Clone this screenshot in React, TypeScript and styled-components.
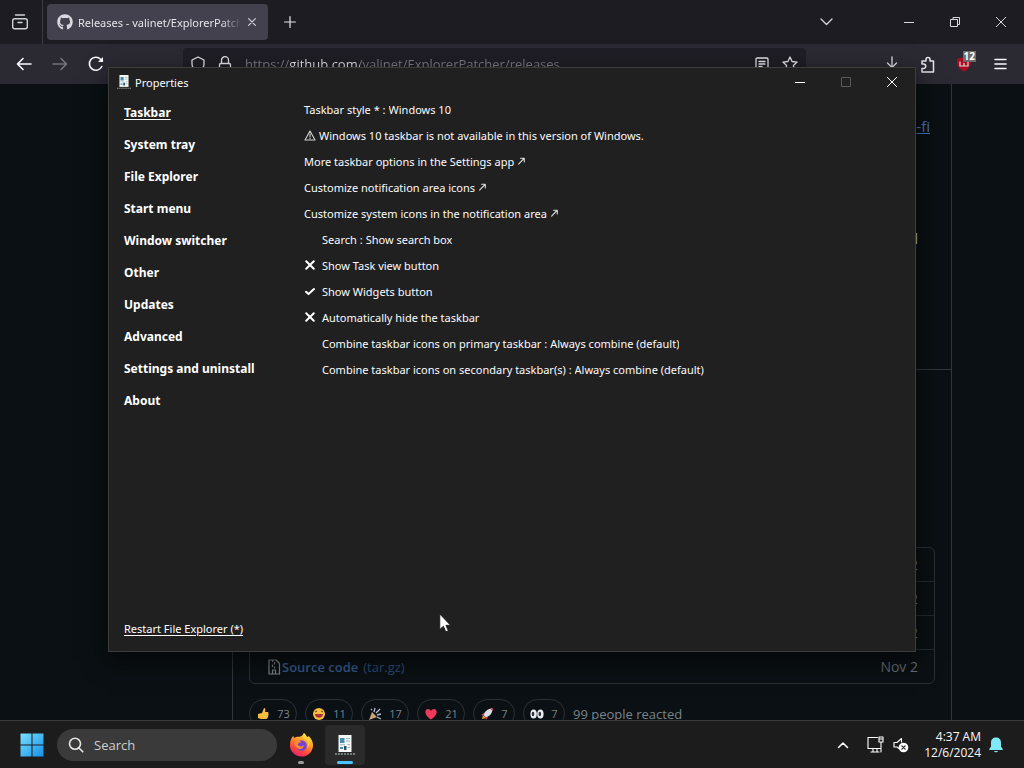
import React from "react";
import styled, { createGlobalStyle } from "styled-components";
import { FaGithub } from "react-icons/fa";

const sans = `"Open Sans", "Noto Sans", sans-serif`;
const ui = `"Noto Sans", "Open Sans", sans-serif`;

const GlobalStyle = createGlobalStyle`
  * { box-sizing: border-box; }
  body { margin: 0; background: #0a1013; font-family: ${sans}; font-size: 12px; color: #fbfbfe; overflow: hidden; }
  button, input, select { font: inherit; color: inherit; border: 0; padding: 0; margin: 0; background: none; outline: 0; }
  svg { display: block; flex: none; }
`;

const Desktop = styled.div`
  position: relative;
  height: 100vh;
  display: flex;
  flex-direction: column;
`;

/* ---------- Browser ---------- */

const TabStrip = styled.header`
  height: 44px;
  flex: none;
  display: flex;
  align-items: center;
  background: #1d1c23;
`;

const ViewButton = styled.button`
  width: 43px;
  height: 44px;
  display: grid;
  place-items: center;
  padding-right: 2px;
  border-right: 1px solid #3b3a44;
`;

const Tab = styled.div`
  width: 221px;
  height: 36px;
  margin-left: 4px;
  padding: 0 10px;
  display: flex;
  align-items: center;
  gap: 5px;
  border-radius: 4px;
  background: #42414d;
`;

const TabTitle = styled.span`
  flex: 1;
  overflow: hidden;
  white-space: nowrap;
  font-family: ${ui};
  font-size: 11px;
  color: #e4e4ea;
  mask-image: linear-gradient(to right, #000 88%, transparent);
`;

const IconButton = styled.button<{ $w?: number; $h?: number }>`
  width: ${(p) => p.$w ?? 36}px;
  height: ${(p) => p.$h ?? 32}px;
  flex: none;
  display: grid;
  place-items: center;
`;

const Spacer = styled.div`
  flex: 1;
`;

const TabMenu = styled(IconButton)`
  margin-right: 42px;
`;

const NavBar = styled.div`
  height: 40px;
  flex: none;
  padding: 0 6px;
  display: flex;
  align-items: center;
  background: #2b2a33;
`;

const UrlBar = styled.div`
  flex: 1;
  height: 32px;
  margin: 0 68px 0 69px;
  padding: 0 8px;
  display: flex;
  align-items: center;
  gap: 13px;
  border-radius: 4px;
  background: #1f1e26;
`;

const UrlInput = styled.input`
  flex: 1;
  min-width: 0;
  font-size: 13px;
  color: transparent;
  background: linear-gradient(to right, #7d7c86 45px, #e8e8ee 45px, #e8e8ee 115px, #7d7c86 115px);
  background-clip: text;
`;

const BlockerButton = styled(IconButton)`
  position: relative;
`;

const Count = styled.span`
  position: absolute;
  right: 6px;
  top: 3px;
  padding: 0 1px;
  font-size: 10px;
  line-height: 11px;
  font-weight: 700;
  background: #6b6b6b;
  color: #fff;
`;

const Page = styled.main`
  flex: 1;
  min-height: 0;
  overflow: hidden;
  background: #0a1013;
`;

const Release = styled.article`
  margin: 0 72px 0 232px;
  min-height: 100%;
  border: solid #30363b;
  border-width: 0 1px;
  font-size: 14px;
`;

const Notes = styled.section`
  height: 286px;
  padding: 32px 21px;
  display: flex;
  flex-direction: column;
  align-items: flex-end;
  gap: 91px;
  line-height: 21px;
  border-bottom: 1px solid #30363b;
`;

const NotesLink = styled.a`
  color: #4475bd;
  font-size: 15px;
`;

const NotesText = styled.span`
  margin-right: 12px;
  color: #c4cad0;
`;

const Assets = styled.section`
  padding: 177px 16px 0;
`;

const AssetList = styled.ul`
  margin: 0 0 15px;
  padding: 0;
  list-style: none;
  border: 1px solid #2a3135;
  border-radius: 6px;
`;

const AssetRow = styled.li`
  height: 34px;
  padding: 0 16px;
  display: flex;
  align-items: center;
  justify-content: space-between;
  color: #646b72;
  &:first-child { height: 33px; }
  & + & { border-top: 1px solid #242a2e; }
`;

const AssetLink = styled.a`
  display: flex;
  align-items: center;
  gap: 1px;
  color: #35588d;
  text-decoration: none;
  strong { font-weight: 600; font-size: 13px; }
`;

const AssetExt = styled.span`
  margin-left: 4px;
  font-size: 13px;
  color: #2b4a78;
`;

const Reactions = styled.div`
  display: flex;
  align-items: center;
  gap: 8px;
  color: #7b838b;
  font-size: 13px;
`;

const Reaction = styled.button<{ $wide?: boolean }>`
  width: ${(p) => (p.$wide ? 48 : 42)}px;
  height: 29px;
  display: flex;
  align-items: center;
  justify-content: center;
  gap: 7px;
  border: 1px solid #2c3338;
  border-radius: 15px;
  font-size: 11px;
`;

/* ---------- Properties window ---------- */

const Window = styled.section`
  position: absolute;
  inset: 67px 108px 116px;
  display: flex;
  flex-direction: column;
  font-family: ${ui};
  font-size: 11px;
  background: #202020;
  border: 1px solid #3c3e3e;
  box-shadow: 0 8px 24px rgba(0, 0, 0, 0.6);
`;

const TitleBar = styled.div`
  height: 28px;
  flex: none;
  padding-left: 8px;
  display: flex;
  align-items: center;
`;

const WindowTitle = styled.h1`
  margin: 0 0 0 4px;
  flex: 1;
  font-size: 11px;
  font-weight: 400;
`;

const WindowBody = styled.div`
  flex: 1;
  min-height: 0;
  display: flex;
  padding-left: 15px;
`;

const Sections = styled.nav`
  width: 180px;
  padding-top: 1px;
  display: flex;
  flex-direction: column;
  font-size: 12px;
`;

const SectionLink = styled.a<{ $active?: boolean }>`
  line-height: 32px;
  font-weight: 700;
  color: #fff;
  text-decoration: ${(p) => (p.$active ? "underline" : "none")};
  text-underline-offset: 2px;
`;

const Options = styled.div`
  flex: 1;
`;

const Option = styled.div`
  height: 26px;
  display: flex;
  align-items: center;
  gap: 3px;
  white-space: nowrap;
`;

const OptionLabel = styled.label<{ $indent?: boolean }>`
  padding-left: ${(p) => (p.$indent ? 18 : 0)}px;
`;

const Choice = styled.select`
  appearance: none;
  field-sizing: content;
`;

const OptionLink = styled.a`
  display: flex;
  align-items: center;
  gap: 4px;
  color: inherit;
  text-decoration: none;
`;

const Toggle = styled.label`
  display: flex;
  align-items: center;
  gap: 6px;
`;

const ToggleInput = styled.input`
  appearance: none;
  width: 0;
  height: 0;
  margin-right: -6px;
`;

const WindowFooter = styled.footer`
  height: 44px;
  flex: none;
  padding-left: 15px;
`;

const RestartLink = styled.a`
  color: #fff;
  line-height: 44px;
  text-underline-offset: 2px;
`;

const Pointer = styled.svg`
  position: absolute;
  left: 439px;
  top: 613px;
`;

/* ---------- Taskbar ---------- */

const TaskBar = styled.footer`
  height: 48px;
  flex: none;
  display: flex;
  align-items: center;
  padding: 0 19px 0 12px;
  background: #1c1c1c;
  border-top: 1px solid #393c3d;
`;

const SearchBox = styled.label`
  width: 220px;
  height: 32px;
  margin: 0 4px 0 5px;
  padding: 0 11px;
  display: flex;
  align-items: center;
  gap: 10px;
  border-radius: 16px;
  background: #3a3a3a;
`;

const SearchInput = styled.input`
  flex: 1;
  min-width: 0;
  font-size: 13px;
  &::placeholder { color: #cfcfcf; opacity: 1; }
`;

const AppButton = styled.button<{ $active?: boolean }>`
  position: relative;
  width: 40px;
  height: 40px;
  margin-right: 4px;
  display: grid;
  place-items: center;
  border-radius: 4px;
  background: ${(p) => (p.$active ? "#2a2a2a" : "transparent")};
  &::after {
    content: "";
    position: absolute;
    bottom: 1px;
    left: 50%;
    transform: translateX(-50%);
    width: ${(p) => (p.$active ? 16 : 6)}px;
    height: 3px;
    border-radius: 2px;
    background: ${(p) => (p.$active ? "#4cc2ff" : "#9a9a9a")};
  }
`;

const Tray = styled.button`
  display: flex;
  align-items: center;
  gap: 9px;
  margin: 0 15px 0 18px;
`;

const Clock = styled.button`
  margin-right: 6px;
  font-family: ${sans};
  font-size: 12px;
  line-height: 16px;
  text-align: right;
`;

/* ---------- Drawings ---------- */

const line = (color = "#fbfbfe", width = 1.3) => ({
  fill: "none",
  stroke: color,
  strokeWidth: width,
  strokeLinecap: "round" as const,
  strokeLinejoin: "round" as const,
});

const Caption = ({ kind, color = "#fff" }: { kind: "min" | "max" | "restore" | "close"; color?: string }) => (
  <svg width="12" height="12" viewBox="0 0 12 12" fill="none" stroke={color} strokeWidth="1">
    {kind === "min" && <path d="M1 6.5h10" />}
    {kind === "max" && <path d="M1.500 1.500h9v9h-9z" />}
    {kind === "restore" && <path d="M1.500 3.500h7v7h-7zM4 3.500v-2h6.500v7h-2" />}
    {kind === "close" && <path d="M1 1l10 10M11 1L1 11" />}
  </svg>
);

const Document = ({ size }: { size: number }) => (
  <svg width={size} height={size} viewBox="0 0 20 20">
    <path d="M3.500 0h13v17h-13z" fill="#f4f8f8" />
    <path d="M5 3h4.500v5H5zM5 12h3v2H5z" fill="#3f8fae" />
    <path d="M9 11h2.500v4H9z" fill="#34505c" />
    <path d="M11 3.500h4M11 6h4M5 9.800h5M12.500 9.500h2.500M12.500 12.500h2.500" stroke="#9db4b8" />
    <path d="M0 19h20" stroke="#8b9a98" strokeWidth="1.500" strokeDasharray="2 1" />
  </svg>
);

const NorthEast = () => (
  <svg width="7" height="8" viewBox="0 0 7 8" {...line("#d8d8d8", 1.1)}>
    <path d="M.6 7.200L6 1.500M2.500 1.200H6.300V5" />
  </svg>
);

const Mark = ({ on }: { on: boolean }) => (
  <svg width="12" height="12" viewBox="0 0 12 12" {...line("#fff", 2)}>
    {on ? <path d="M2 6.800l2.500 2.300L10 4" /> : <path d="M2.200 2.200l7.600 7.600M9.800 2.200L2.200 9.800" />}
  </svg>
);

const Warning = () => (
  <svg width="12" height="11" viewBox="0 0 12 11" {...line("#d0d0d0", 1.1)}>
    <path d="M6 1L11 10H1zM6 4v3M6 8.200v.4" />
  </svg>
);

const Firefox = () => (
  <svg width="25" height="25" viewBox="0 0 26 26">
    <defs>
      <linearGradient id="ff" x1="0.8" y1="0" x2="0.3" y2="1">
        <stop offset="0" stopColor="#fff04a" />
        <stop offset="0.4" stopColor="#ff9a26" />
        <stop offset="0.75" stopColor="#ff4340" />
        <stop offset="1" stopColor="#e32072" />
      </linearGradient>
    </defs>
    <path d="M15.500 1c2 1.500 2.500 3 3.500 4.500.8-.3.900-1 1-1.700 3 2.700 5 5.800 5 9.700a12 12 0 0 1-24 .2C1 9.500 2.300 6 4.600 3.800c.1 1 .3 1.700.8 2.400C7 5 9 4.800 10.500 5c2-.2 4.200-1.500 5-4z" fill="url(#ff)" />
    <circle cx="13" cy="14" r="5.500" fill="#7543d8" />
    <path d="M6 9.500c3-1.500 5.300-.6 7 1.100-2.200.2-3.800 1.100-3.900 2.700 1.500 2.400 4.700 1.900 6.500.6-.5 3.100-3.200 4.500-6 3.400C6.500 16 5.500 13 6 9.500z" fill="#ff8a2b" />
    <path d="M15 6c5 2 6 7 3.500 11 3.800-2.500 4-7.500 1.500-10.500L15.500 1c-.8 2-1 3.500-.5 5z" fill="#ffd83d" opacity=".75" />
  </svg>
);

const glyphs: Record<string, React.ReactNode> = {
  thumb: <path d="M6 6L8 1c1.500 0 1.700 1.500 1 4h3c1 1 .6 6-1.500 7H5L2 11V7z" fill="#f7bd3c" />,
  laugh: (
    <>
      <circle cx="7" cy="7" r="6" fill="#f8bd42" />
      <path d="M3 7h8c0 5-8 5-8 0z" fill="#a8323c" />
      <path d="M3 5l2-1M11 5L9 4" stroke="#633b19" />
    </>
  ),
  party: (
    <>
      <path d="M1 13L4 5l5 5z" fill="#c9a27b" />
      <path d="M6 5l1-4M8 6l4-4M9 8l4-1M9 10l4 2M4 3L3 2" stroke="#b6bfd0" strokeWidth="1.300" />
    </>
  ),
  heart: <path d="M7 12.500C-1 7 1 2 4 2c1.500 0 2.500.8 3 2 .5-1.200 1.500-2 3-2 3 0 5 5-3 10.500z" fill="#f2385a" />,
  rocket: (
    <>
      <path d="M2 12l1-4 3 3z" fill="#f5a13b" />
      <path d="M3.500 8C5 4 8 1.500 12.500 1.500 12.500 6 10 9 6 10.500z" fill="#d9dde6" />
      <path d="M4 6L1 8l3 1zM8 10l-2 3-1-3zM10 1.500l3-.5-.5 3z" fill="#d53a5c" />
    </>
  ),
  eyes: (
    <>
      <ellipse cx="3.600" cy="7" rx="3.200" ry="4.600" fill="#e8ebf2" />
      <ellipse cx="10.400" cy="7" rx="3.200" ry="4.600" fill="#e8ebf2" />
      <ellipse cx="3" cy="7" rx="1.300" ry="2.200" fill="#33313a" />
      <ellipse cx="9.800" cy="7" rx="1.300" ry="2.200" fill="#33313a" />
    </>
  ),
};

const reactions: [string, number][] = [
  ["thumb", 73],
  ["laugh", 11],
  ["party", 17],
  ["heart", 21],
  ["rocket", 7],
  ["eyes", 7],
];

const sections = [
  "Taskbar",
  "System tray",
  "File Explorer",
  "Start menu",
  "Window switcher",
  "Other",
  "Updates",
  "Advanced",
  "Settings and uninstall",
  "About",
];

const LinkOption = ({ children }: { children: string }) => (
  <Option>
    <OptionLink href="#">
      {children}
      <NorthEast />
    </OptionLink>
  </Option>
);

const SelectOption = ({ id, label, value, indent }: { id: string; label: string; value: string; indent?: boolean }) => (
  <Option>
    <OptionLabel htmlFor={id} $indent={indent}>
      {label} :
    </OptionLabel>
    <Choice id={id}>
      <option>{value}</option>
    </Choice>
  </Option>
);

const ToggleOption = ({ label, initial }: { label: string; initial: boolean }) => {
  const [on, setOn] = React.useState(initial);
  return (
    <Option>
      <Toggle>
        <ToggleInput type="checkbox" checked={on} onChange={() => setOn(!on)} />
        <Mark on={on} />
        {label}
      </Toggle>
    </Option>
  );
};

const Browser = () => (
  <>
    <TabStrip>
      <ViewButton aria-label="Firefox View">
        <svg width="16" height="16" viewBox="0 0 16 16" {...line("#d0d0d8", 1.4)}>
          <path d="M3.500 1h9M2.700 4.700h10.600c1.300 0 2 .7 2 2v6c0 1.300-.7 2-2 2H2.700c-1.300 0-2-.7-2-2v-6c0-1.300.7-2 2-2zM6 8.500h4" />
        </svg>
      </ViewButton>
      <Tab>
        <FaGithub size={16} color="#d8d8de" />
        <TabTitle>Releases - valinet/ExplorerPatcher</TabTitle>
        <IconButton $w={12} aria-label="Close tab">
          <svg width="8" height="8" viewBox="0 0 8 8" {...line("#d8d8de", 1.1)}>
            <path d="M.6.6l6.800 6.800M7.400.6L.6 7.400" />
          </svg>
        </IconButton>
      </Tab>
      <IconButton $w={44} aria-label="New tab">
        <svg width="12" height="12" viewBox="0 0 12 12" {...line("#e4e4ea", 1.2)}>
          <path d="M6 .6v10.800M.6 6h10.800" />
        </svg>
      </IconButton>
      <Spacer />
      <TabMenu aria-label="List all tabs">
        <svg width="13" height="8" viewBox="0 0 13 8" {...line("#d0d0d8", 1.4)}>
          <path d="M1 1l5.500 5.500L12 1" />
        </svg>
      </TabMenu>
      <IconButton $w={46} $h={44} aria-label="Minimize browser"><Caption kind="min" color="#d8d8de" /></IconButton>
      <IconButton $w={46} $h={44} aria-label="Restore browser"><Caption kind="restore" color="#d8d8de" /></IconButton>
      <IconButton $w={46} $h={44} aria-label="Close browser"><Caption kind="close" color="#d8d8de" /></IconButton>
    </TabStrip>
    <NavBar>
      <IconButton aria-label="Back">
        <svg width="16" height="14" viewBox="0 0 16 14" {...line("#fbfbfe", 1.6)}>
          <path d="M15 7H1.500M7 1.500L1.500 7 7 12.500" />
        </svg>
      </IconButton>
      <IconButton aria-label="Forward">
        <svg width="16" height="14" viewBox="0 0 16 14" {...line("#74737d", 1.6)}>
          <path d="M1 7h13.500M9 1.500L14.500 7 9 12.500" />
        </svg>
      </IconButton>
      <IconButton aria-label="Reload">
        <svg width="16" height="16" viewBox="0 0 16 16" {...line("#fbfbfe", 1.6)}>
          <path d="M13.800 10.500A6.500 6.500 0 1 1 12.600 3.200L14.500 5" />
          <path d="M15 1v5h-5z" fill="#fbfbfe" stroke="none" />
        </svg>
      </IconButton>
      <UrlBar>
        <svg width="14" height="16" viewBox="0 0 14 16" {...line("#e4e4ea")}>
          <path d="M7 1l6 3v4c0 3.500-2.500 6-6 7.300C3.500 14 1 11.500 1 8V4z" />
        </svg>
        <svg width="14" height="16" viewBox="0 0 14 16" {...line("#e4e4ea")}>
          <path d="M3.500 7V4.200a3.500 3.500 0 0 1 7 0V7M2.800 7.500h8.400c.8 0 1.300.5 1.300 1.300v5c0 .8-.5 1.300-1.300 1.300H2.800c-.8 0-1.300-.5-1.300-1.300v-5c0-.8.500-1.300 1.300-1.300z" />
        </svg>
        <UrlInput aria-label="Address" defaultValue="https://github.com/valinet/ExplorerPatcher/releases" />
        <svg width="14" height="14" viewBox="0 0 14 14" {...line("#e4e4ea")}>
          <path d="M2.200 1h9.600c.7 0 1.200.5 1.200 1.200v9.600c0 .7-.5 1.200-1.200 1.200H2.200c-.7 0-1.200-.5-1.200-1.200V2.200C1 1.500 1.500 1 2.200 1zM4 4.500h6M4 7h6M4 9.500h3" />
        </svg>
        <svg width="16" height="16" viewBox="0 0 16 16" {...line("#e4e4ea")}>
          <path d="M8 1l2.100 4.500 5 .6-3.700 3.400 1 5L8 12l-4.400 2.500 1-5L.9 6.100l5-.6z" />
        </svg>
      </UrlBar>
      <IconButton aria-label="Downloads">
        <svg width="14" height="16" viewBox="0 0 14 16" {...line("#e4e4ea")}>
          <path d="M7 1v10M2.500 7L7 11.500 11.500 7M1 14.500h12" />
        </svg>
      </IconButton>
      <IconButton aria-label="Extensions">
        <svg width="16" height="17" viewBox="0 0 16 17" {...line("#e4e4ea", 1.5)}>
          <path d="M2 8V5h4V3.500a2 2 0 0 1 4 0V5h3.500v11H2v-3.500h1.500a2.200 2.200 0 0 0 0-4.500z" />
        </svg>
      </IconButton>
      <BlockerButton aria-label="Content blocker">
        <svg width="16" height="16" viewBox="0 0 16 16">
          <path d="M1 3l7-2 7 2c.5 6-1.500 10-7 12.500C2.500 13 .5 9 1 3z" fill="#a90c20" />
          <path d="M4 5.500v4.500h4V7M8 10h4V5.500" fill="none" stroke="#ded8da" strokeWidth="1.200" />
        </svg>
        <Count>12</Count>
      </BlockerButton>
      <IconButton aria-label="Application menu">
        <svg width="13" height="12" viewBox="0 0 13 12" {...line("#fbfbfe", 1.5)}>
          <path d="M1 1.500h11M1 6h11M1 10.500h11" />
        </svg>
      </IconButton>
    </NavBar>
    <Page>
      <Release>
        <Notes>
          <NotesLink href="#">-fi</NotesLink>
          <NotesText>d</NotesText>
        </Notes>
        <Assets>
          <AssetList>
            <AssetRow><span /><time>Nov 2</time></AssetRow>
            <AssetRow><span /><time>Nov 2</time></AssetRow>
            <AssetRow><span /><time>Nov 2</time></AssetRow>
            <AssetRow>
              <AssetLink href="#">
                <svg width="15" height="16" viewBox="0 0 15 16" {...line("#7b8086", 1.2)}>
                  <path d="M6 15H3V1h7l3.500 3.500V15H10M6.500 1v1.500M8.500 3.500V5M6.500 6v1.500M8.500 8v1M6.500 11h3v4h-3z" />
                </svg>
                <strong>Source code</strong>
                <AssetExt>(tar.gz)</AssetExt>
              </AssetLink>
              <time>Nov 2</time>
            </AssetRow>
          </AssetList>
          <Reactions>
            {reactions.map(([name, count]) => (
              <Reaction key={name} $wide={count > 9} aria-label={name}>
                <svg width="14" height="14" viewBox="0 0 14 14" fill="none">{glyphs[name]}</svg>
                {count}
              </Reaction>
            ))}
            <span>99 people reacted</span>
          </Reactions>
        </Assets>
      </Release>
    </Page>
  </>
);

const PropertiesWindow = () => (
  <Window>
    <TitleBar>
      <Document size={14} />
      <WindowTitle>Properties</WindowTitle>
      <IconButton $w={46} $h={28} aria-label="Minimize"><Caption kind="min" /></IconButton>
      <IconButton $w={46} $h={28} aria-label="Maximize" disabled><Caption kind="max" color="#5a5a5a" /></IconButton>
      <IconButton $w={46} $h={28} aria-label="Close"><Caption kind="close" /></IconButton>
    </TitleBar>
    <WindowBody>
      <Sections>
        {sections.map((name, i) => (
          <SectionLink key={name} href="#" $active={i === 0}>{name}</SectionLink>
        ))}
      </Sections>
      <Options>
        <SelectOption id="style" label="Taskbar style *" value="Windows 10" />
        <Option><Warning />Windows 10 taskbar is not available in this version of Windows.</Option>
        <LinkOption>More taskbar options in the Settings app</LinkOption>
        <LinkOption>Customize notification area icons</LinkOption>
        <LinkOption>Customize system icons in the notification area</LinkOption>
        <SelectOption id="search" label="Search" value="Show search box" indent />
        <ToggleOption label="Show Task view button" initial={false} />
        <ToggleOption label="Show Widgets button" initial />
        <ToggleOption label="Automatically hide the taskbar" initial={false} />
        <SelectOption id="primary" label="Combine taskbar icons on primary taskbar" value="Always combine (default)" indent />
        <SelectOption id="secondary" label="Combine taskbar icons on secondary taskbar(s)" value="Always combine (default)" indent />
      </Options>
    </WindowBody>
    <WindowFooter>
      <RestartLink href="#">Restart File Explorer (*)</RestartLink>
    </WindowFooter>
  </Window>
);

const SystemTaskbar = () => (
  <TaskBar>
    <IconButton $w={40} $h={40} aria-label="Start">
      <svg width="24" height="24" viewBox="0 0 24 24">
        <defs>
          <linearGradient id="win" x1="0" y1="0" x2="1" y2="1">
            <stop offset="0" stopColor="#7ae0fc" />
            <stop offset="1" stopColor="#1490e8" />
          </linearGradient>
        </defs>
        <path d="M.5.5h11v11H.5zM12.500.5h11v11h-11zM.5 12.500h11v11H.5zM12.500 12.500h11v11h-11z" fill="url(#win)" />
      </svg>
    </IconButton>
    <SearchBox>
      <svg width="16" height="16" viewBox="0 0 16 16" {...line("#e6e6e6", 1.6)}>
        <path d="M12.500 6.800a5.500 5.500 0 1 1-11 0 5.500 5.500 0 0 1 11 0zM11 11l3.800 3.800" />
      </svg>
      <SearchInput aria-label="Search" placeholder="Search" />
    </SearchBox>
    <AppButton aria-label="Firefox"><Firefox /></AppButton>
    <AppButton $active aria-label="Properties"><Document size={20} /></AppButton>
    <Spacer />
    <IconButton $w={12} aria-label="Show hidden icons">
      <svg width="12" height="8" viewBox="0 0 12 8" {...line("#fff", 1.5)}>
        <path d="M1.500 6.500L6 2l4.500 4.500" />
      </svg>
    </IconButton>
    <Tray aria-label="Network and volume">
      <svg width="17" height="17" viewBox="0 0 17 17" {...line("#fff", 1.1)}>
        <path d="M10.500 1.500H1v11h12M4 16h8M6 12.500V16M10 12.500V16M12 1h4v5h-4zM14 6v10M13 3h2" />
      </svg>
      <svg width="16" height="16" viewBox="0 0 16 16" {...line("#fff", 1.1)}>
        <path d="M6 11.500L4 10H1V5.500h3L8.500 1.500V5" />
        <circle cx="10.500" cy="10.500" r="4.800" fill="#fff" stroke="none" />
        <path d="M8.800 8.800l3.400 3.400M12.200 8.800l-3.400 3.400" stroke="#1c1c1c" />
      </svg>
    </Tray>
    <Clock>
      <div>4:37 AM</div>
      <div>12/6/2024</div>
    </Clock>
    <IconButton $w={18} aria-label="Notifications">
      <svg width="14" height="16" viewBox="0 0 14 16" fill="#7fe9f5">
        <path d="M7 .5c3 0 5 2 5 5v4l1.700 2.500c.2.500 0 1-.6 1H.9c-.6 0-.8-.5-.6-1L2 9.500v-4c0-3 2-5 5-5zM5 14h4c-.5 1.700-3.500 1.700-4 0z" />
      </svg>
    </IconButton>
  </TaskBar>
);

export default function App() {
  return (
    <Desktop>
      <GlobalStyle />
      <Browser />
      <SystemTaskbar />
      <PropertiesWindow />
      <Pointer width="12" height="20" viewBox="0 0 12 20" aria-hidden="true">
        <path d="M.8 1v15.500l3.600-3.300 2.400 5.600 2.500-1-2.400-5.500h4.600z" fill="#fff" stroke="#111" strokeWidth=".8" />
      </Pointer>
    </Desktop>
  );
}
